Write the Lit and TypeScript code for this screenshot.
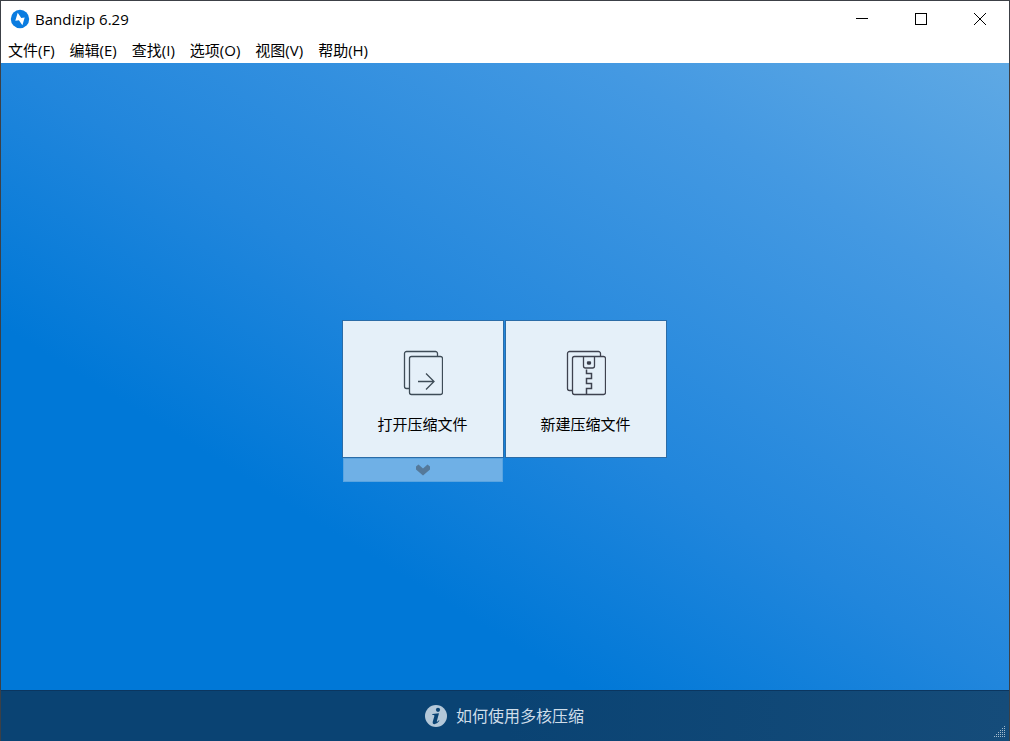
import { LitElement, html, css, svg } from "lit";
import { customElement, state } from "lit/decorators.js";

const MENUS = ["文件(F)", "编辑(E)", "查找(I)", "选项(O)", "视图(V)", "帮助(H)"];

const logo = svg`<svg width="20" height="20" viewBox="0 0 20 20" aria-hidden="true">
  <circle cx="10" cy="10" r="9.200" fill="#0a7ce0"/>
  <path d="M7.700 3.800 11.300 8.900 14.700 8.600 12.400 16.200 8.900 11.300 5.300 11.800Z" fill="#fff"/>
</svg>`;

const openIcon = svg`<svg width="40" height="46" viewBox="0 0 40 46" fill="none" stroke="#3e4c57" stroke-width="1.3" aria-hidden="true">
  <path d="M34.5 6V3.5a2 2 0 0 0-2-2h-29a2 2 0 0 0-2 2v33a2 2 0 0 0 2 2H6"/>
  <rect x="6.5" y="6.5" width="33" height="38" rx="2"/>
  <path d="M15 31.500h16M23 23.500l8 8-8 8"/>
</svg>`;

const newIcon = svg`<svg width="40" height="46" viewBox="0 0 40 46" fill="none" stroke="#3e424f" stroke-width="1.3" aria-hidden="true">
  <path d="M34.500 6V3.500a2 2 0 0 0-2-2h-29a2 2 0 0 0-2 2v35a2 2 0 0 0 2 2H6"/>
  <rect x="6.500" y="6.500" width="33" height="38" rx="2"/>
  <path d="M17.500 6.500v9.500a2 2 0 0 0 2 2h7a2 2 0 0 0 2-2V6.500"/>
  <path d="M20.500 19.500v4h5v5h-5v5h5v5h-5v6" stroke-width="1.500"/>
  <rect x="21.500" y="12" width="3" height="2" rx="0.500" fill="#2e3340"/>
</svg>`;

@customElement("app-root")
export class AppRoot extends LitElement {
  @state() private recentOpen = false;

  static styles = css`
    :host {
      display: flex;
      flex-direction: column;
      box-sizing: border-box;
      min-height: 100vh;
      border: 1px solid #3c4046;
      border-bottom: 0;
      background: #fff;
      color: #000;
      font-family: "Open Sans", "Noto Sans CJK SC", sans-serif;
      font-size: 15px;
    }
    button {
      margin: 0;
      padding: 0;
      border: 0;
      background: none;
      color: inherit;
      font: inherit;
    }
    .titlebar {
      display: flex;
      align-items: center;
      height: 36px;
      padding-left: 9px;
    }
    .title {
      flex: 1;
      margin: 0 0 0 5px;
      font-size: 15px;
      font-weight: 400;
    }
    .controls {
      display: flex;
      align-self: stretch;
    }
    .control {
      display: grid;
      place-items: center;
      width: 59px;
    }
    .control:hover {
      background: #e5e5e5;
    }
    .menubar {
      display: flex;
      gap: 15px;
      height: 26px;
      padding-left: 7px;
    }
    .menubar button {
      line-height: 26px;
    }
    .stage {
      flex: 1;
      display: flex;
      align-items: center;
      justify-content: center;
      padding: 49px 2px 0 0;
      background: linear-gradient(to top right, #0078d7 29%, #2186dc 50%, #4499e2 80%, #5fa9e4);
    }
    .tiles {
      display: grid;
      grid-template-columns: 162px 162px;
      gap: 1px;
      align-items: start;
    }
    .tile {
      display: flex;
      flex-direction: column;
      align-items: center;
      box-sizing: border-box;
      width: 100%;
      height: 138px;
      padding-top: 29px;
      border: 1px solid #2a6ca8;
      background: #e5f0f9;
      line-height: 24px;
    }
    .tile span {
      margin-top: 16px;
    }
    .more {
      display: grid;
      place-items: center;
      width: 160px;
      height: 24px;
      margin-left: 1px;
      border: 1px solid #5aa4e0;
      background: #6fb0e6;
    }
    .footer {
      display: grid;
      grid-template-columns: 1fr auto 1fr;
      align-items: center;
      height: 50px;
      padding-right: 2px;
      border-top: 1px solid #0b3660;
      background: linear-gradient(to right, #0a4373, #0a4373 50%, #154c7a);
    }
    .tip {
      grid-column: 2;
      display: flex;
      align-items: center;
      gap: 8px;
      color: #cfdde9;
      font-size: 16px;
      line-height: 24px;
      text-decoration: none;
    }
    .grip {
      justify-self: end;
      align-self: end;
      margin: 0 1px 3px 0;
    }
    svg {
      display: block;
    }
  `;

  private grip() {
    const dots = [];
    for (let row = 0; row < 6; row++) {
      for (let col = 5 - row; col < 6; col++) {
        dots.push(svg`<rect x=${col * 2} y=${row * 2} width="1" height="1"/>`);
      }
    }
    return svg`<svg class="grip" width="12" height="12" fill="#a5bccd" aria-hidden="true">${dots}</svg>`;
  }

  render() {
    return html`
      <header class="titlebar">
        ${logo}
        <h1 class="title">Bandizip 6.29</h1>
        <div class="controls">
          <button class="control" aria-label="最小化">
            <svg width="12" height="12"><path d="M0 5.500h12" stroke="#000"/></svg>
          </button>
          <button class="control" aria-label="最大化">
            <svg width="12" height="12"><rect x=".5" y=".5" width="11" height="11" fill="none" stroke="#000"/></svg>
          </button>
          <button class="control" aria-label="关闭">
            <svg width="12" height="12"><path d="M0 0 12 12M12 0 0 12" stroke="#000"/></svg>
          </button>
        </div>
      </header>
      <nav class="menubar">${MENUS.map((m) => html`<button>${m}</button>`)}</nav>
      <main class="stage">
        <div class="tiles">
          <div>
            <button class="tile">${openIcon}<span>打开压缩文件</span></button>
            <button
              class="more"
              aria-label="最近的文件"
              aria-expanded=${this.recentOpen ? "true" : "false"}
              @click=${() => (this.recentOpen = !this.recentOpen)}
            >
              <svg width="16" height="12" viewBox="0 0 16 12"><path d="M1 2.500 3.500 .5 8 4.500 12.500 .5 15 2.500V5.500L8 11.500 1 5.500Z" fill="#55799a"/></svg>
            </button>
          </div>
          <button class="tile">${newIcon}<span>新建压缩文件</span></button>
        </div>
      </main>
      <footer class="footer">
        <a class="tip" href="#multicore">
          <svg width="24" height="24" viewBox="0 0 24 24" aria-hidden="true">
            <circle cx="12" cy="12" r="11" fill="#b4c8d9"/>
            <circle cx="14" cy="5.800" r="2.100" fill="#0a4373"/>
            <path d="M8.500 10 15 9.200 12.800 17.200Q12.700 18 13.500 17.500L14.900 16.200 15.500 16.800Q13 20.200 10.400 20.200 8.200 20 8.800 17.400L10.400 11.900Q10.500 11 9.700 11L8.200 11Z" fill="#0a4373"/>
          </svg>
          <span>如何使用多核压缩</span>
        </a>
        ${this.grip()}
      </footer>
    `;
  }
}
